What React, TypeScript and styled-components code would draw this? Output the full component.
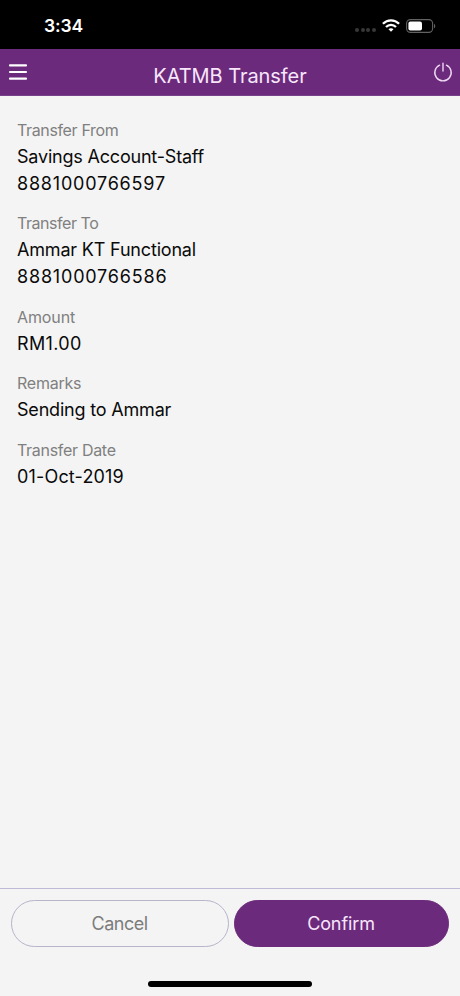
import React from 'react';
import styled, { createGlobalStyle } from 'styled-components';

const purple = '#6b2a7b';

const GlobalStyle = createGlobalStyle`
  * { box-sizing: border-box; }
  body { margin: 0; background: #f4f4f4; font-family: Inter, "Liberation Sans", sans-serif; }
`;

const Screen = styled.div`
  display: flex;
  flex-direction: column;
  width: 460px;
  height: 996px;
  background: #f4f4f4;
  overflow: hidden;
`;

const StatusBar = styled.header`
  display: flex;
  align-items: center;
  justify-content: space-between;
  height: 49px;
  padding: 2px 24px 0 44px;
  background: #000;
  color: #fff;
`;

const Clock = styled.time`
  font-size: 17.5px;
  font-weight: 600;
  line-height: 22px;
  letter-spacing: -0.15px;
`;

const StatusIcons = styled.div`
  display: flex;
  align-items: center;
  gap: 6px;
`;

const SignalDots = styled.div`
  display: flex;
  gap: 1.7px;
  padding-top: 9px;
`;

const Dot = styled.span`
  width: 4px;
  height: 4px;
  border-radius: 50%;
  background: #383838;
`;

const NavBar = styled.nav`
  display: grid;
  grid-template-columns: 40px 1fr 40px;
  align-items: center;
  height: 47px;
  padding: 0 7px 0 8px;
  background: ${purple};
  border-bottom: 1px solid #79408a;
  color: #fff;
`;

const IconButton = styled.button<{ $end?: boolean }>`
  display: flex;
  justify-content: ${(p) => (p.$end ? 'flex-end' : 'flex-start')};
  padding: 0;
  border: 0;
  background: none;
  color: #fff;
`;

const Title = styled.h1`
  margin: 0;
  padding: 8px 1px 0 0;
  font-size: 20px;
  font-weight: 400;
  line-height: 26px;
  letter-spacing: -0.05px;
  text-align: center;
  color: #f8e6fb;
`;

const Details = styled.dl`
  flex: 1;
  display: flex;
  flex-direction: column;
  gap: 14px;
  margin: 0;
  padding: 22px 17px;
`;

const Field = styled.div`
  display: flex;
  flex-direction: column;
`;

const Label = styled.dt<{ $tracking: number }>`
  font-size: 16px;
  font-weight: 400;
  line-height: 25px;
  padding-bottom: 1px;
  letter-spacing: ${(p) => p.$tracking}px;
  color: #808080;
`;

const Value = styled.dd<{ $tracking: number }>`
  margin: 0;
  font-size: 18px;
  font-weight: 400;
  line-height: 26.67px;
  letter-spacing: ${(p) => p.$tracking}px;
  color: #0a0a0a;
`;

const Footer = styled.footer`
  display: flex;
  flex-direction: column;
  height: 108px;
  border-top: 1.5px solid #bdbbd8;
`;

const Actions = styled.div`
  display: grid;
  grid-template-columns: 218px 215px;
  gap: 5px;
  padding: 11px 11px 0;
`;

const ActionButton = styled.button<{ $primary?: boolean }>`
  height: 47px;
  padding: 0 1px 1px 0;
  border: 1px solid ${(p) => (p.$primary ? purple : '#b6b5ca')};
  border-radius: 24px;
  background: ${(p) => (p.$primary ? purple : 'transparent')};
  color: ${(p) => (p.$primary ? '#f8e6fb' : '#7c7c7c')};
  font-family: inherit;
  font-size: 18px;
  font-weight: 400;
  letter-spacing: ${(p) => (p.$primary ? '-0.1px' : '-0.5px')};
`;

const HomeIndicator = styled.div`
  align-self: center;
  width: 164px;
  height: 5.5px;
  margin-top: 34px;
  border-radius: 3px;
  background: #000;
`;

type Line = [text: string, tracking: number];

const fields: { label: Line; values: Line[] }[] = [
  { label: ['Transfer From', -0.36], values: [['Savings Account-Staff', -0.2], ['8881000766597', 0.79]] },
  { label: ['Transfer To', -0.45], values: [['Ammar KT Functional', -0.18], ['8881000766586', 0.81]] },
  { label: ['Amount', -0.1], values: [['RM1.00', 0.33]] },
  { label: ['Remarks', -0.25], values: [['Sending to Ammar', -0.19]] },
  { label: ['Transfer Date', -0.3], values: [['01-Oct-2019', 0.17]] },
];

const WifiIcon = () => (
  <svg width="18" height="13" viewBox="0 0 18 13" fill="none" stroke="#fff" strokeWidth="2.3">
    <path d="M0.9 4.8C5.5 0.2 12.5 0.2 17.1 4.8" />
    <path d="M4 8C6.8 5.1 11.2 5.1 14 8" />
    <path d="M9 12.8L6.5 10.3C7.8 8.9 10.2 8.9 11.5 10.3Z" fill="#fff" stroke="none" />
  </svg>
);

const BatteryIcon = () => (
  <svg width="30" height="14" viewBox="0 0 30 14">
    <rect x="0.6" y="0.6" width="26" height="12.8" rx="3.8" fill="none" stroke="#626262" strokeWidth="1.1" />
    <rect x="2.4" y="2.4" width="13.6" height="9.2" rx="2" fill="#fff" />
    <path d="M28 4.7C29.7 5.5 29.7 8.5 28 9.3Z" fill="#626262" />
  </svg>
);

const MenuIcon = () => (
  <svg width="20" height="18" viewBox="0 0 20 18" fill="none" stroke="#fff" strokeWidth="2.2" strokeLinecap="round">
    <path d="M2 2.4H18M2 9H18M2 15.7H18" />
  </svg>
);

const PowerIcon = () => (
  <svg width="20" height="20" viewBox="0 0 20 20" fill="none" stroke="#f0d8f4" strokeWidth="1.4" strokeLinecap="round">
    <path d="M6.6 3.2A8.2 8.2 0 1 0 13.4 3.2M10 1.2V9" />
  </svg>
);

export default function App() {
  return (
    <>
      <GlobalStyle />
      <Screen>
        <StatusBar>
          <Clock>3:34</Clock>
          <StatusIcons>
            <SignalDots>
              <Dot />
              <Dot />
              <Dot />
              <Dot />
            </SignalDots>
            <WifiIcon />
            <BatteryIcon />
          </StatusIcons>
        </StatusBar>
        <NavBar>
          <IconButton aria-label="Menu">
            <MenuIcon />
          </IconButton>
          <Title>KATMB Transfer</Title>
          <IconButton $end aria-label="Log out">
            <PowerIcon />
          </IconButton>
        </NavBar>
        <Details>
          {fields.map(({ label, values }) => (
            <Field key={label[0]}>
              <Label $tracking={label[1]}>{label[0]}</Label>
              {values.map(([text, tracking]) => (
                <Value key={text} $tracking={tracking}>
                  {text}
                </Value>
              ))}
            </Field>
          ))}
        </Details>
        <Footer>
          <Actions>
            <ActionButton>Cancel</ActionButton>
            <ActionButton $primary>Confirm</ActionButton>
          </Actions>
          <HomeIndicator />
        </Footer>
      </Screen>
    </>
  );
}
